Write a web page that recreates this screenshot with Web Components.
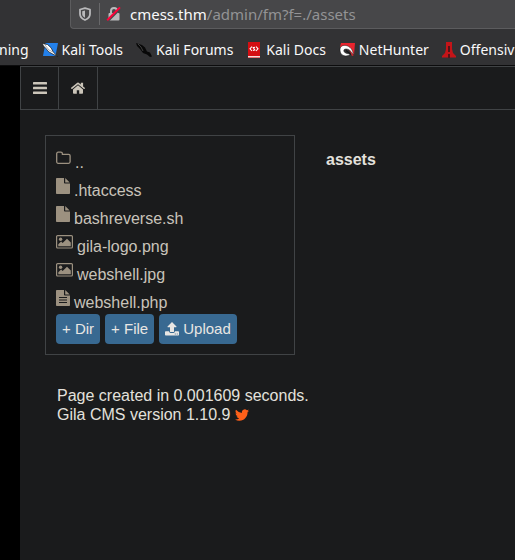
<!DOCTYPE html>
<html lang="en">
<head>
<meta charset="utf-8">
<title>File manager</title>
<style>
html, body { margin: 0; height: 100%; background: #000; }
</style>
</head>
<body>
<app-window></app-window>
<script>
const icons = {
  shield: ['0 0 16 16', '<path d="M8 2.200 13 3.500V8c0 2.800-1.800 4.700-5 6-3.200-1.300-5-3.200-5-6V3.500z" fill="none" stroke="#b9b9bb" stroke-width="1.800" stroke-linejoin="round"/><path d="M8 4.600v7.200C6.200 10.800 5.200 9.600 5.200 7.900V5.300z" fill="#b9b9bb"/>'],
  lock: ['0 0 16 16', '<path d="M5 8V5a3 3 0 0 1 6 0v3" fill="none" stroke="#b9b9bb" stroke-width="2"/><rect x="2.500" y="7" width="11" height="7.500" rx="1" fill="#b9b9bb"/><path d="M2 15 14.500 2.500" stroke="#48484a" stroke-width="2"/><path d="M1.200 14.200 14 1.400" stroke="#ff0039" stroke-width="2"/>'],
  tools: ['0 0 16 16', '<path d="M3.500 1H16l-2.500 13H1z" fill="#2380ea"/><path d="m0 1 2.500 1 3 .5 3.500 3.200 2.200 4.100 4.300 4.700-4.800-2.500-3.900-2.100L4 6.500 1.500 4z" fill="#fff" stroke="#111" stroke-width=".7"/><path d="m3 3 4 5 4 2" fill="none" stroke="#777" stroke-width=".6"/>'],
  forums: ['0 0 16 16', '<path d="m0 1 3 1 3 1 3 2.500 2 4 3 1 2 4-2 .5-3-2.500-4-1.500-3-4L1 4z" fill="#080808"/><path d="m2 2 3 3 2 4" fill="none" stroke="#555" stroke-width=".7"/>'],
  docs: ['0 0 16 16', '<path d="M2 0h12v16H2z" fill="#d50e12"/><path d="M2 14h12v1.500H2z" fill="#f8dada"/><path d="M6 4.500 4 6.800 6 9M10 4.500l2 2.300L10 9M9 5.200 7.200 5.600 8.800 8 7 8.500" fill="none" stroke="#fff" stroke-width="1.100"/>'],
  net: ['0 0 16 16', '<path d="M2 1h14l-1 12-2 1L9 5H1z" fill="#e9242e"/><path d="M1 7.500C1 4 4 3 7 3.500c4 .8 7 4.200 7.500 9.500C12 9 10 7.200 7.500 7 5 6.800 4.500 8 5 9.500c1 2 4.500 3 6.500 1.500-.5 3-6 4-8.700 1.500C1.500 11.300 1 9.500 1 7.500z" fill="#fff" stroke="#171717" stroke-width=".5"/><path d="m7 8.500 5 4" stroke="#161616" stroke-width="1.200"/>'],
  offsec: ['0 0 14 16', '<path d="M4 0h6v7l1 4 3 3v1.500H0V14l3-3 1-4z" fill="#c41418"/><path d="M6.200 4h1.600v6H6.200z" fill="#35151a"/><path d="M6 12h2v4H6z" fill="#571216"/>'],
  bars: ['0 0 14 14', '<g fill="#cbc5b9"><rect x="0" y="1" width="14" height="2.500" rx=".5"/><rect x="0" y="5.700" width="14" height="2.500" rx=".5"/><rect x="0" y="10.400" width="14" height="2.500" rx=".5"/></g>'],
  home: ['0 0 16 14', '<g fill="#cbc5b9"><path d="M8 4.300 13 8.500V12a.8.8 0 0 1-.8.8H9.200V9.300H6.800v3.500H3.800A.8.8 0 0 1 3 12V8.500z"/><path d="m15 7.300-.6.700-.5.100L8 3.200 2.100 8.100 1.600 8 1 7.300l.1-.5L7.300 1.700q.7-.5 1.400 0l2.100 1.800V1.800h2.300v3.600l1.900 1.500z"/></g>'],
  folder: ['0 0 15 16', '<path d="M.7 3.700c0-.9.600-1.500 1.500-1.500h2.700c.9 0 1.500.6 1.500 1.500v.6h6.200c.9 0 1.500.6 1.500 1.500v6c0 .9-.6 1.500-1.500 1.500H2.200c-.9 0-1.500-.6-1.500-1.500z" fill="none" stroke="#9c9180" stroke-width="1.300"/>'],
  file: ['0 0 14 16', '<path d="M.8 0H8v4.800c0 .5.400.8.800.8H14v9.600a.8.800 0 0 1-.8.800H.8A.8.800 0 0 1 0 15.200V.8A.8.800 0 0 1 .8 0zM9.200 0 13.700 4.500H9.200z" fill="#9c9180"/>'],
  text: ['0 0 14 16', '<path d="M.8 0H8v4.800c0 .5.400.8.800.8H14v9.600a.8.800 0 0 1-.8.800H.8A.8.800 0 0 1 0 15.200V.8A.8.800 0 0 1 .8 0zM9.200 0 13.700 4.500H9.200z" fill="#9c9180"/><path d="M3 7.500h8M3 10h8M3 12.500h8" stroke="#1a1b1c"/>'],
  image: ['0 0 17 16', '<rect x=".6" y="1.600" width="15.800" height="12.400" rx="1" fill="none" stroke="#9c9180" stroke-width="1.200"/><circle cx="4.600" cy="5.300" r="1.700" fill="#9c9180"/><path d="M2.300 12.300v-2l2.800-2.800 1.500 1.500L11 4.700l3.800 3.800v3.800z" fill="#9c9180"/>'],
  upload: ['0 0 14 14', '<path fill="#e8e6e3" d="M7 0 11.500 4.500q.2.600-.4.800H9v4.200q0 .5-.5.500h-3Q5 10 5 9.500V5.300H2.900q-.6-.2-.4-.8zM.8 9.300H4q.3 1.700 1.500 1.700h3Q9.700 11 10 9.300h3.200q.8 0 .8.800v2.600q0 .8-.8.800H.8q-.8 0-.8-.8v-2.600q0-.8.800-.8z"/><path d="M9.800 12h.9M11.800 12h.9" stroke="#386991"/>'],
  bird: ['0 0 24 24', '<path fill="#ff6019" d="M24 4.600a10 10 0 0 1-2.800.8 5 5 0 0 0 2.200-2.700 10 10 0 0 1-3.100 1.200 4.900 4.900 0 0 0-8.400 4.500A14 14 0 0 1 1.700 3.200a4.900 4.900 0 0 0 1.500 6.500A5 5 0 0 1 1 9.100a4.900 4.900 0 0 0 3.900 4.900 5 5 0 0 1-2.200.1 4.900 4.900 0 0 0 4.600 3.400A9.900 9.900 0 0 1 0 19.500 14 14 0 0 0 7.500 21.700c9.100 0 14.300-7.700 14-14.600A10 10 0 0 0 24 4.600z"/>']
};

function define(name, render) {
  customElements.define(name, class extends HTMLElement {
    connectedCallback() {
      if (!this.shadowRoot) this.attachShadow({ mode: 'open' }).innerHTML = render(this);
    }
  });
}

define('ui-icon', el => {
  const [box, art] = icons[el.getAttribute('name')];
  const [, , w, h] = box.split(' ').map(Number);
  const size = Number(el.getAttribute('size') || h);
  return `<style>:host{display:inline-block;flex:none;line-height:0}svg{display:block}</style>
    <svg viewBox="${box}" width="${Math.round(w * size / h)}" height="${size}" aria-hidden="true">${art}</svg>`;
});

define('address-bar', () => `<style>
  :host{display:flex;align-items:center;height:29px;margin-left:70px;box-sizing:border-box;padding-left:6px;
    background:#474749;border:solid #5c5c5e;border-width:0 0 1px 1px;border-radius:0 0 0 4px;
    font:15px/20px "Noto Sans",sans-serif;color:#939395}
  i{width:1px;height:22px;background:#68686a;margin:0 6px}
  .url{margin-left:8px;white-space:nowrap} b{font-weight:400;color:#f9f9fa}
</style><ui-icon name="shield"></ui-icon><i></i><ui-icon name="lock"></ui-icon>
<span class="url"><b>cmess.thm</b>/admin/fm?f=./assets</span>`);

define('bookmark-link', el => `<style>
  :host{display:block;flex:none}
  a{display:flex;align-items:center;gap:4px;color:#f9f9fa;text-decoration:none;white-space:nowrap}
</style><a href="#">${el.hasAttribute('icon') ? `<ui-icon name="${el.getAttribute('icon')}"></ui-icon>` : ''}<slot></slot></a>`);

define('browser-chrome', () => `<style>
  :host{display:block;background:#323234;height:66px;border-bottom:1px solid #0c0c0d;box-sizing:border-box;overflow:hidden}
  nav{display:flex;gap:13px;margin-left:-1px;padding-top:10px;font:14px/22px "Noto Sans",sans-serif}
</style><address-bar></address-bar>
<nav><bookmark-link>ning</bookmark-link><bookmark-link icon="tools">Kali Tools</bookmark-link>
<bookmark-link icon="forums">Kali Forums</bookmark-link><bookmark-link icon="docs">Kali Docs</bookmark-link>
<bookmark-link icon="net">NetHunter</bookmark-link><bookmark-link icon="offsec">Offensiv</bookmark-link></nav>`);

define('top-bar', () => `<style>
  :host{display:flex;border:solid #404345;border-width:1px 0 1px 1px;height:42px}
  a{display:flex;align-items:center;justify-content:center;width:37px;border-right:1px solid #404345}
  a+a{width:38px}
</style><a href="#" aria-label="Menu"><ui-icon name="bars"></ui-icon></a><a href="#" aria-label="Home"><ui-icon name="home"></ui-icon></a>`);

define('file-row', el => `<style>
  :host{display:block;height:28px;box-sizing:border-box;padding-top:4px}
  a{display:flex;align-items:flex-start;gap:4px;color:#c8c3ba;text-decoration:none;line-height:26px}
</style><a href="#"><ui-icon name="${el.getAttribute('icon')}"></ui-icon><slot></slot></a>`);

define('action-button', el => `<style>
  :host{display:block}
  button{display:flex;align-items:center;gap:4px;height:30px;padding:0 6px;border:0;border-radius:4px;
    background:#386991;color:#e8e6e3;font:15px/20px "Liberation Sans",Arial,sans-serif;white-space:nowrap}
</style><button type="button">${el.hasAttribute('icon') ? `<ui-icon name="${el.getAttribute('icon')}"></ui-icon>` : ''}<slot></slot></button>`);

define('file-list', () => `<style>
  :host{display:block;box-sizing:border-box;border:1px solid #404345;padding:10px}
  div{display:flex;gap:5px}
</style><slot></slot><div><action-button>+ Dir</action-button><action-button>+ File</action-button><action-button icon="upload">Upload</action-button></div>`);

define('page-footer', () => `<style>
  :host{display:block;padding:31px 12px 0;line-height:19px}
  p{margin:0;display:flex;gap:5px;align-items:center} a{display:flex}
</style><p>Page created in 0.001609 seconds.</p><p>Gila CMS version 1.10.9 <a href="#" aria-label="Twitter"><ui-icon name="bird" size="14"></ui-icon></a></p>`);

define('app-window', () => `<style>
  :host{display:flex;flex-direction:column;min-height:100%;font:16px/19px "Liberation Sans",Arial,sans-serif;color:#e3e1dc}
  main{flex:1;margin-left:20px;background:#1a1b1c}
  .content{padding:25px}
  .cols{display:grid;grid-template-columns:minmax(200px,250px) 1fr;gap:31px}
  h1{font-size:16px;line-height:19px;margin:15px 0 0}
</style><browser-chrome></browser-chrome>
<main><top-bar></top-bar><div class="content"><div class="cols">
<file-list><file-row icon="folder">..</file-row><file-row icon="file">.htaccess</file-row><file-row icon="file">bashreverse.sh</file-row>
<file-row icon="image">gila-logo.png</file-row><file-row icon="image">webshell.jpg</file-row><file-row icon="text">webshell.php</file-row></file-list>
<h1>assets</h1></div><page-footer></page-footer></div></main>`);
</script>
</body>
</html>
